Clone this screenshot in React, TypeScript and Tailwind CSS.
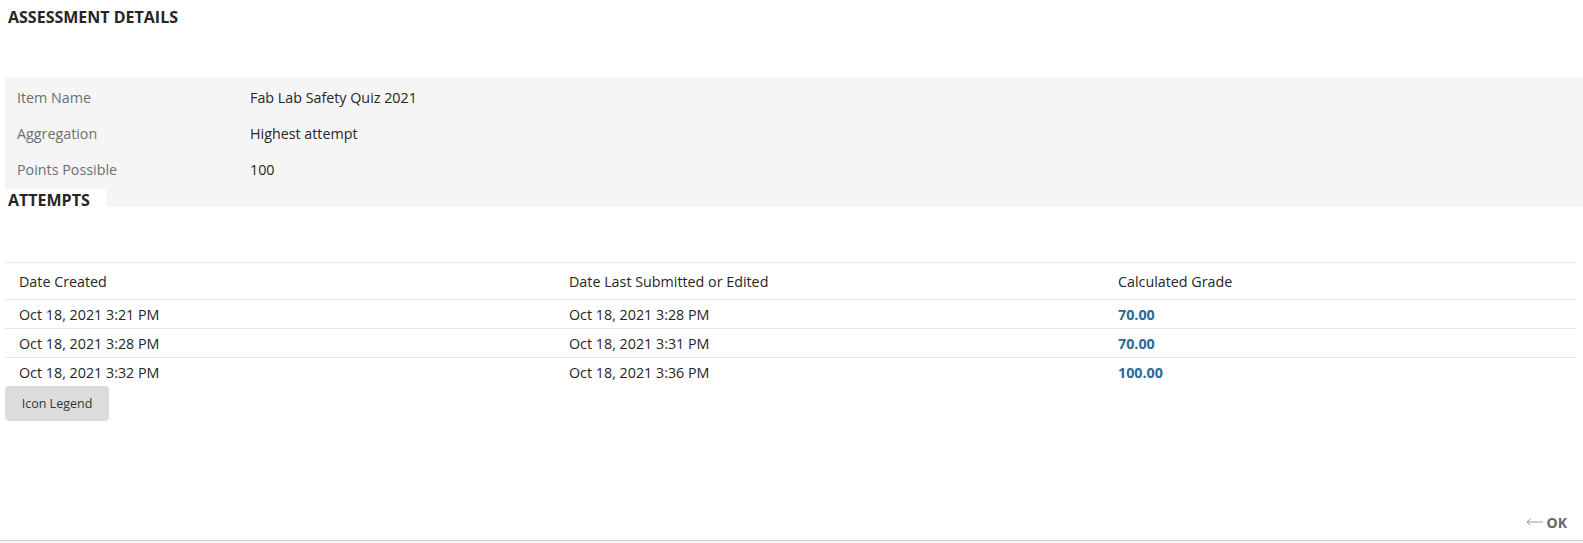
const details = [
  { label: "Item Name", value: "Fab Lab Safety Quiz 2021" },
  { label: "Aggregation", value: "Highest attempt" },
  { label: "Points Possible", value: "100" },
];

const attempts = [
  { created: "Oct 18, 2021 3:21 PM", edited: "Oct 18, 2021 3:28 PM", grade: "70.00" },
  { created: "Oct 18, 2021 3:28 PM", edited: "Oct 18, 2021 3:31 PM", grade: "70.00" },
  { created: "Oct 18, 2021 3:32 PM", edited: "Oct 18, 2021 3:36 PM", grade: "100.00" },
];

function BackArrow() {
  return (
    <svg width="17" height="8" viewBox="0 0 17 8" fill="none" className="shrink-0">
      <path d="M1 4h16M1 4l3.5-3.2M1 4l3.5 3.2" stroke="#9a9a9a" strokeWidth="1" />
    </svg>
  );
}

export default function App() {
  return (
    <div className="flex h-[543px] flex-col bg-white font-['Open_Sans',sans-serif] text-[14.3px] leading-[19px] text-[#262626]">
      <div className="pl-[5px]">
        <h2 className="mt-1.5 pl-[3px] text-[16px] font-bold uppercase leading-[22px]">Assessment Details</h2>

        <div className="mt-[49px] bg-[#f5f5f5] pb-5 pt-[2px]">
          {details.map((d) => (
            <div key={d.label} className="flex h-9 items-center pl-3">
              <span className="w-[233px] text-[#6f6f6f]">{d.label}</span>
              <span>{d.value}</span>
            </div>
          ))}
        </div>

        <h2 className="relative -mt-[18px] w-[101px] bg-white pl-[3px] text-[16px] font-bold uppercase leading-[22px]">
          Attempts
        </h2>

        <div className="mt-[51px] mr-[7px]">
          <div className="grid h-[37px] grid-cols-[550px_549px_1fr] items-center border-t border-[#e6e6e6]">
            <div className="pl-[14px]">Date Created</div>
            <div className="pl-[14px]">Date Last Submitted or Edited</div>
            <div className="pl-[14px]">Calculated Grade</div>
          </div>
          {attempts.map((a, i) => (
            <div
              key={i}
              className="grid h-[29px] grid-cols-[550px_549px_1fr] items-center border-t border-[#e6e6e6]"
            >
              <div className="pl-[14px]">{a.created}</div>
              <div className="pl-[14px]">{a.edited}</div>
              <div className="pl-[14px]">
                <a href="#" className="font-bold text-[#2c6a98]">
                  {a.grade}
                </a>
              </div>
            </div>
          ))}
        </div>

        <button className="flex h-[35px] w-[104px] items-center justify-center rounded-sm bg-[#dcdcdc] text-[12.5px] text-[#333]">
          Icon Legend
        </button>
      </div>

      <div className="flex-1" />

      <div className="flex h-9 items-center justify-end gap-1 pr-4">
        <BackArrow />
        <span className="text-[14px] font-bold uppercase text-[#666]">OK</span>
      </div>
      <div className="h-[3px] border-t border-[#cfcfcf] bg-[#f4f4f4]" />
    </div>
  );
}
